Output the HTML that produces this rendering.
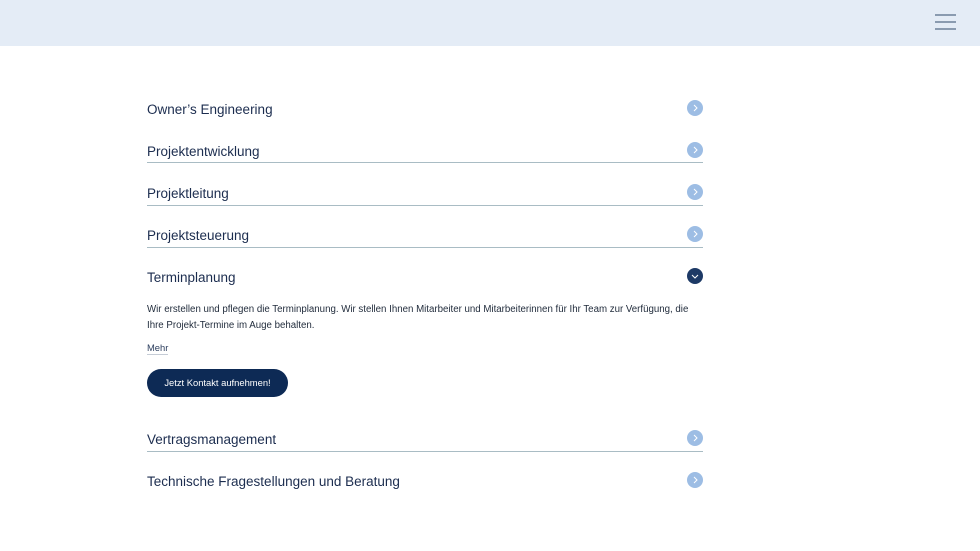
<!DOCTYPE html>
<html><head><style>
body{margin:0;width:980px;height:551px;background:#fff;font-family:"Liberation Sans",sans-serif;color:#1c2d4f;position:relative;overflow:hidden}
.hdr{position:absolute;left:0;top:0;width:980px;height:46px;background:#e4ecf6}
.hb{position:absolute;left:935px;width:21px;height:2px;background:#8a9bb0}
.row{position:absolute;left:147px;width:556px;height:30px}
.row .t{position:absolute;left:0;top:1px;font-size:13.5px;line-height:18px;letter-spacing:0}
.row .c{position:absolute;right:0;top:0;width:16px;height:16px;border-radius:50%;background:#9dbde4}
.row .c svg{position:absolute;left:0;top:0}
.line{position:absolute;left:147px;width:556px;height:1px;background:#a9bcc4}
.p{position:absolute;left:147px;top:302px;width:600px;font-size:9.7px;line-height:16px;color:#1f2a3a;white-space:nowrap}
.mehr{position:absolute;left:147px;top:342px;font-size:9.4px;color:#2c3e5e;border-bottom:1px solid #c5ccd6;padding-bottom:1px}
.btn{position:absolute;left:147px;top:369px;width:141px;height:28px;border-radius:14px;background:#0d2a55;color:#fff;font-size:9.4px;line-height:28px;text-align:center}
</style></head><body>
<div class="hdr"><div class="hb" style="top:14px"></div><div class="hb" style="top:21px"></div><div class="hb" style="top:28px"></div></div>

<div class="row" style="top:100px"><div class="t">Owner’s Engineering</div><div class="c"><svg width="16" height="16"><path d="M7 5l3 3-3 3" stroke="#fff" fill="none" stroke-width="1"/></svg></div></div>
<div class="row" style="top:142px"><div class="t">Projektentwicklung</div><div class="c"><svg width="16" height="16"><path d="M7 5l3 3-3 3" stroke="#fff" fill="none" stroke-width="1"/></svg></div></div>
<div class="line" style="top:162px"></div>
<div class="row" style="top:184px"><div class="t">Projektleitung</div><div class="c"><svg width="16" height="16"><path d="M7 5l3 3-3 3" stroke="#fff" fill="none" stroke-width="1"/></svg></div></div>
<div class="line" style="top:205px"></div>
<div class="row" style="top:226px"><div class="t">Projektsteuerung</div><div class="c"><svg width="16" height="16"><path d="M7 5l3 3-3 3" stroke="#fff" fill="none" stroke-width="1"/></svg></div></div>
<div class="line" style="top:247px"></div>
<div class="row" style="top:268px"><div class="t">Terminplanung</div><div class="c" style="background:#1d3a66"><svg width="16" height="16"><path d="M5 7l3 3 3-3" stroke="#fff" fill="none" stroke-width="1"/></svg></div></div>
<div class="p">Wir erstellen und pflegen die Terminplanung. Wir stellen Ihnen Mitarbeiter und Mitarbeiterinnen für Ihr Team zur Verfügung, die<br>Ihre Projekt-Termine im Auge behalten.</div>
<div class="mehr">Mehr</div>
<div class="btn">Jetzt Kontakt aufnehmen!</div>
<div class="row" style="top:430px"><div class="t">Vertragsmanagement</div><div class="c"><svg width="16" height="16"><path d="M7 5l3 3-3 3" stroke="#fff" fill="none" stroke-width="1"/></svg></div></div>
<div class="line" style="top:451px"></div>
<div class="row" style="top:472px"><div class="t">Technische Fragestellungen und Beratung</div><div class="c"><svg width="16" height="16"><path d="M7 5l3 3-3 3" stroke="#fff" fill="none" stroke-width="1"/></svg></div></div>
</body></html>
